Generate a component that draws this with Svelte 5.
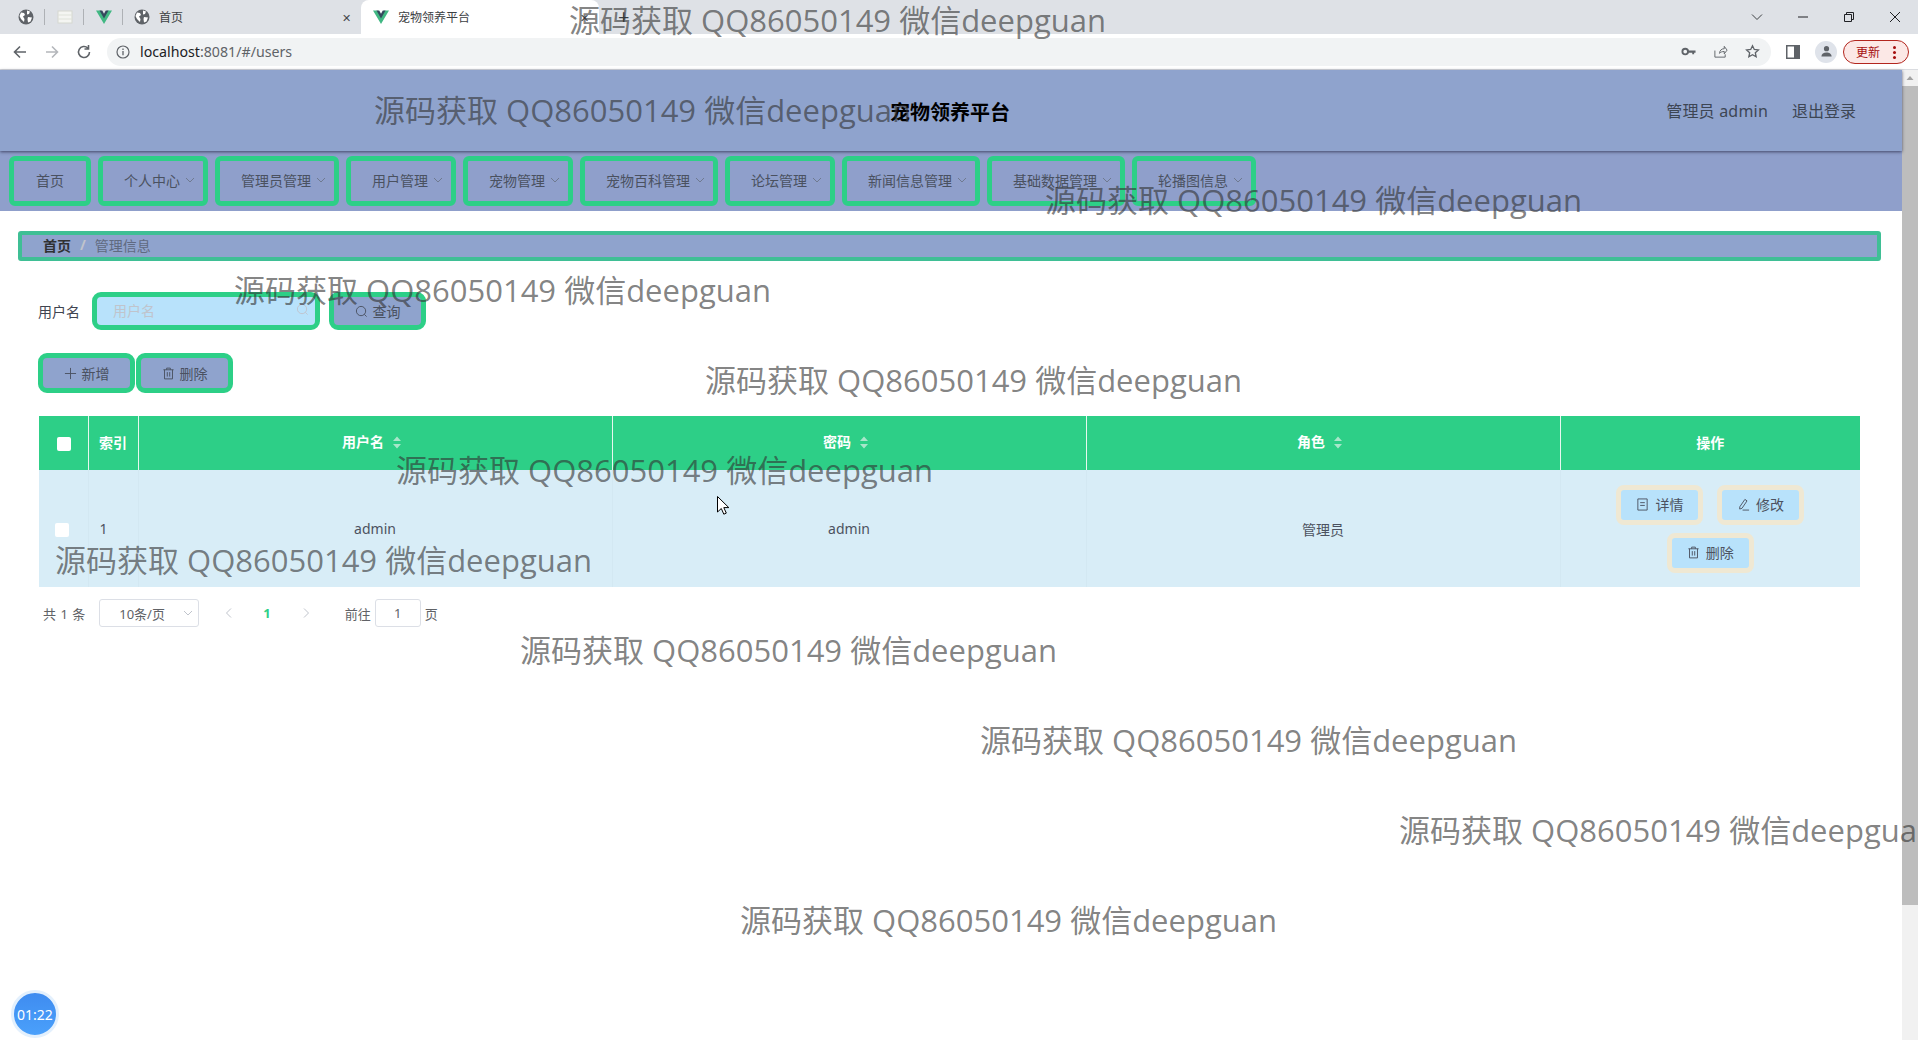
<script lang="ts">
	// Users admin page inside a browser frame. Watermarks sit over everything.
	const menus = [
		{ label: '首页', sub: false },
		{ label: '个人中心', sub: true },
		{ label: '管理员管理', sub: true },
		{ label: '用户管理', sub: true },
		{ label: '宠物管理', sub: true },
		{ label: '宠物百科管理', sub: true },
		{ label: '论坛管理', sub: true },
		{ label: '新闻信息管理', sub: true },
		{ label: '基础数据管理', sub: true },
		{ label: '轮播图信息', sub: true }
	];

	// left / top of each repeated watermark line, the scatter is the content
	const marks = [
		[569, -1],
		[374, 89],
		[1045, 179],
		[234, 269],
		[705, 359],
		[396, 449],
		[55, 539],
		[520, 629],
		[980, 719],
		[1399, 809],
		[740, 899]
	];
</script>

{#snippet vue()}
	<svg class="fav" viewBox="0 0 16 16"><path d="M0 1.5h4.5L8 7.5l3.500-6H16L8 15z" fill="#41b883" /><path d="M3.500 1.500h2.700L8 4.700l1.800-3.200h2.700L8 9.500z" fill="#35495e" /></svg>
{/snippet}

{#snippet globe()}
	<svg class="fav" viewBox="0 0 16 16"><circle cx="8" cy="8" r="7.500" fill="#5f6368" /><path d="M3 3.500l3 .5 1 2-2 1.500 1.500 2.500-.5 3L3 10 1.500 7zM9 1.500l3 1-1 2.500-2 .5zM10 8l4 .5-1.500 4L10 13.500 9.500 10z" fill="#fff" /></svg>
{/snippet}

{#snippet caret()}
	<svg class="caret" viewBox="0 0 12 12"><path d="M2 4l4 4 4-4" fill="none" stroke="currentColor" stroke-width="1" /></svg>
{/snippet}

{#snippet sort()}
	<svg class="sort" viewBox="0 0 10 14"><path d="M5 1l4 4.500H1zM5 13L1 8.500h8z" fill="currentColor" /></svg>
{/snippet}

{#snippet trash()}
	<svg class="ico" viewBox="0 0 14 14"><path d="M1.500 3h11M5 3V1.200h4V3M2.700 3v9.800h8.600V3M5.700 5.500v4.800M8.300 5.500v4.800" fill="none" stroke="currentColor" stroke-width="1" /></svg>
{/snippet}

{#snippet search()}
	<svg class="ico" viewBox="0 0 14 14"><circle cx="6.500" cy="6.500" r="5" fill="none" stroke="currentColor" stroke-width="1" /><path d="M10 10l2.500 2.500" stroke="currentColor" stroke-width="1" /></svg>
{/snippet}

<div class="browser">
	<div class="tabstrip">
		<div class="pinned">{@render globe()}</div>
		<div class="pinned">
			<svg class="fav" viewBox="0 0 16 16"><rect x="1" y="2" width="14" height="12" fill="#f4f5f2" stroke="#d5d8d0" /><path d="M1 6h14M1 10h14" stroke="#dfe2da" /></svg>
		</div>
		<div class="pinned">{@render vue()}</div>
		<div class="tab">
			{@render globe()}
			<span class="tab-title">首页</span>
			<span class="tab-close">✕</span>
		</div>
		<div class="tab active">
			{@render vue()}
			<span class="tab-title">宠物领养平台</span>
			<span class="tab-close">✕</span>
		</div>
		<span class="newtab">+</span>
		<div class="winctl">
			<svg viewBox="0 0 12 12"><path d="M1 3.500l5 5 5-5" fill="none" stroke="#3c4043" /></svg>
			<svg viewBox="0 0 12 12"><path d="M1 6h10" stroke="#202124" /></svg>
			<svg viewBox="0 0 12 12"><path d="M1.500 3.500h7v7h-7zM3.500 3.500v-2h7v7h-2" fill="none" stroke="#202124" /></svg>
			<svg viewBox="0 0 12 12"><path d="M1 1l10 10M11 1L1 11" stroke="#202124" /></svg>
		</div>
	</div>

	<div class="toolbar">
		<svg class="nav-ico" viewBox="0 0 16 16"><path d="M14 8H2.500M8 2.500L2.500 8 8 13.500" fill="none" stroke="#5f6368" stroke-width="1.600" /></svg>
		<svg class="nav-ico" viewBox="0 0 16 16"><path d="M2 8h11.500M8 2.500L13.500 8 8 13.500" fill="none" stroke="#b4b7bb" stroke-width="1.600" /></svg>
		<svg class="nav-ico" viewBox="0 0 16 16"><path d="M13.500 8A5.500 5.500 0 1 1 11.800 4M12.500 1v4h-4" fill="none" stroke="#5f6368" stroke-width="1.600" /></svg>
		<div class="omnibox">
			<svg class="info" viewBox="0 0 14 14"><circle cx="7" cy="7" r="6" fill="none" stroke="#5f6368" stroke-width="1.200" /><path d="M7 6v4.200M7 3.500v1.400" stroke="#5f6368" stroke-width="1.300" /></svg>
			<span class="url">localhost<span class="url-dim">:8081/#/users</span></span>
			<span class="omni-right">
				<svg viewBox="0 0 16 16"><circle cx="4.500" cy="8" r="3" fill="none" stroke="#5f6368" stroke-width="2" /><path d="M7.500 7h8v2.200h-1.500V11H12V9.200H7.500z" fill="#5f6368" /></svg>
				<svg viewBox="0 0 16 16"><path d="M2 7v7h11v-3M7 10c0-3 2-5 5-5V2.500l3 4-3 4V8c-2 0-4 .5-5 2z" fill="none" stroke="#5f6368" /></svg>
				<svg viewBox="0 0 16 16"><path d="M8 1.800l1.900 4 4.400.5-3.300 3 .9 4.400L8 11.500l-3.900 2.200.9-4.400-3.300-3 4.400-.5z" fill="none" stroke="#5f6368" stroke-width="1.400" /></svg>
			</span>
		</div>
		<svg class="panel" viewBox="0 0 14 14"><path d="M0 0h14v14H0z" fill="#5f6368" /><path d="M1.500 1.500h6.500v11H1.500z" fill="#fff" /></svg>
		<span class="avatar">
			<svg viewBox="0 0 14 14"><circle cx="7" cy="4" r="2.800" fill="#5f6368" /><path d="M1.500 12.500c0-3 2.500-4.500 5.500-4.500s5.500 1.500 5.500 4.500z" fill="#5f6368" /></svg>
		</span>
		<span class="update">更新<i class="dots"></i></span>
	</div>

	<div class="viewport">
		<div class="page">
			<header class="top">
				<span></span>
				<h1 class="title">宠物领养平台</h1>
				<div class="user">
					<span class="who">管理员 admin</span>
					<span>退出登录</span>
				</div>
			</header>

			<nav class="menu">
				{#each menus as m (m.label)}
					<div class="menu-item" class:plain={!m.sub}>
						{m.label}
						{#if m.sub}{@render caret()}{/if}
					</div>
				{/each}
			</nav>

			<div class="crumb">
				<b>首页</b>
				<i>/</i>
				<span>管理信息</span>
			</div>

			<div class="filter">
				<span class="field-label">用户名</span>
				<div class="input">
					<span>用户名</span>
					{@render search()}
				</div>
				<button class="btn query">{@render search()}查询</button>
			</div>

			<div class="actions">
				<button class="btn">
					<svg class="ico" viewBox="0 0 14 14"><path d="M7 1v12M1 7h12" stroke="currentColor" stroke-width="1" /></svg>
					新增
				</button>
				<button class="btn">{@render trash()}删除</button>
			</div>

			<table class="grid">
				<colgroup>
					<col style="width: 49px" />
					<col style="width: 50px" />
					<col style="width: 474px" />
					<col style="width: 474px" />
					<col style="width: 474px" />
					<col />
				</colgroup>
				<thead>
					<tr>
						<th><span class="check head"></span></th>
						<th>索引</th>
						<th class="sortable">用户名{@render sort()}</th>
						<th class="sortable">密码{@render sort()}</th>
						<th class="sortable">角色{@render sort()}</th>
						<th>操作</th>
					</tr>
				</thead>
				<tbody>
					<tr>
						<td><span class="check"></span></td>
						<td class="idx">1</td>
						<td>admin</td>
						<td>admin</td>
						<td>管理员</td>
						<td class="ops">
							<button class="op">
								<svg class="ico" viewBox="0 0 14 14"><path d="M2 1h10v12H2zM4.500 5h5M4.500 8h5" fill="none" stroke="currentColor" /></svg>
								详情
							</button>
							<button class="op">
								<svg class="ico" viewBox="0 0 14 14"><path d="M3 9.500L8.500 1.500l2.300 1.600-5.400 8-2.500.8zM6 13h7" fill="none" stroke="currentColor" /></svg>
								修改
							</button>
							<button class="op">{@render trash()}删除</button>
						</td>
					</tr>
				</tbody>
			</table>

			<div class="pager">
				<span class="total">共 1 条</span>
				<div class="size">10条/页{@render caret()}</div>
				<svg class="arrow" viewBox="0 0 12 12"><path d="M8 1.500L3.500 6 8 10.500" fill="none" stroke="#c0c4cc" /></svg>
				<b class="current">1</b>
				<svg class="arrow" viewBox="0 0 12 12"><path d="M4 1.500L8.500 6 4 10.500" fill="none" stroke="#c0c4cc" /></svg>
				<span class="goto">前往</span>
				<span class="jump">1</span>
				<span>页</span>
			</div>
		</div>

		<div class="scrollbar">
			<svg viewBox="0 0 16 16"><path d="M4.500 10L8 6l3.500 4z" fill="#a3a3a3" /></svg>
			<div class="thumb"></div>
		</div>
	</div>

	<div class="timer">01:22</div>

	<svg class="cursor" viewBox="0 0 12 19"><path d="M.5.500v15.500l3.800-3.500 2.500 5.700 2.500-1.100-2.500-5.500h5z" fill="#fff" stroke="#000" /></svg>

	{#each marks as [x, y]}
		<div class="mark" style="left: {x}px; top: {y}px">源码获取 QQ86050149 微信deepguan</div>
	{/each}
</div>

<style>
	:global(body) {
		margin: 0;
		overflow: hidden;
		background: #fff;
	}

	.browser {
		position: relative;
		height: 1040px;
		overflow: hidden;
		font-family: 'Noto Sans', 'Noto Sans CJK SC', sans-serif;
		display: flex;
		flex-direction: column;
	}

	/* browser frame */
	.tabstrip {
		height: 34px;
		flex: none;
		background: #dee1e6;
		display: flex;
		align-items: stretch;
		padding-left: 6px;
		font-size: 12px;
		color: #3c4043;
	}

	.fav {
		width: 16px;
		height: 16px;
		flex: none;
	}

	.pinned {
		width: 39px;
		display: flex;
		align-items: center;
		justify-content: center;
		position: relative;
	}

	.pinned::after {
		content: '';
		position: absolute;
		right: 0;
		top: 9px;
		bottom: 9px;
		width: 1px;
		background: #aeb1b5;
	}

	.tab {
		width: 238px;
		display: flex;
		align-items: center;
		gap: 9px;
		padding: 0 10px 0 11px;
		box-sizing: border-box;
	}

	.tab.active {
		background: #fff;
		border-radius: 8px 8px 0 0;
		padding-left: 12px;
	}

	.tab-title {
		flex: 1;
	}

	.tab-close {
		font-size: 11px;
		color: #45484c;
	}

	.newtab {
		font-size: 20px;
		line-height: 34px;
		margin-left: 19px;
		color: #3c4043;
	}

	.winctl {
		margin-left: auto;
		display: flex;
		align-items: center;
		gap: 34px;
		padding-right: 17px;
	}

	.winctl svg {
		width: 12px;
		height: 12px;
	}

	.toolbar {
		height: 36px;
		flex: none;
		background: #fff;
		display: flex;
		align-items: center;
		padding-left: 12px;
		box-sizing: border-box;
		border-bottom: 1px solid #dadce0;
	}

	.nav-ico {
		width: 16px;
		height: 16px;
		margin-right: 16px;
	}

	.omnibox {
		width: 1664px;
		height: 28px;
		margin-left: -1px;
		background: #f1f3f4;
		border-radius: 14px;
		display: flex;
		align-items: center;
		padding: 0 9px;
		box-sizing: border-box;
		font-size: 14.2px;
		color: #202124;
	}

	.info {
		width: 14px;
		height: 14px;
		margin-right: 10px;
	}

	.url-dim {
		color: #5f6368;
	}

	.omni-right {
		margin-left: auto;
		display: flex;
		gap: 17px;
		padding-right: 2px;
	}

	.omni-right svg {
		width: 15px;
		height: 15px;
	}

	.panel {
		width: 14px;
		height: 14px;
		margin-left: 15px;
	}

	.avatar {
		width: 22px;
		height: 22px;
		border-radius: 50%;
		background: #dfe3ea;
		margin-left: 15px;
		display: flex;
		align-items: center;
		justify-content: center;
	}

	.avatar svg {
		width: 13px;
		height: 13px;
	}

	.update {
		width: 66px;
		height: 24px;
		margin-left: 6px;
		box-sizing: border-box;
		border: 1px solid #b3261e;
		border-radius: 12px;
		background: #fce8e6;
		color: #a50e0e;
		font-size: 12px;
		padding-left: 12px;
		display: flex;
		align-items: center;
		position: relative;
	}

	.dots {
		position: absolute;
		right: 12px;
		top: 5px;
		width: 3px;
		height: 3px;
		border-radius: 50%;
		background: #a50e0e;
		box-shadow:
			0 5px 0 #a50e0e,
			0 10px 0 #a50e0e;
	}

	/* page */
	.viewport {
		flex: 1;
		display: flex;
		min-height: 0;
	}

	.page {
		width: 1902px;
		flex: none;
		font-size: 14px;
		color: #606266;
	}

	.top {
		height: 81px;
		background: #8fa3cd;
		display: grid;
		grid-template-columns: 1fr auto 1fr;
		align-items: center;
		box-shadow: 0 1px 3px rgba(40, 40, 70, 0.75);
		position: relative;
	}

	.title {
		margin: 1px 2px 0 0;
		font-size: 20px;
		font-weight: 700;
		color: #000;
	}

	.user {
		display: flex;
		justify-content: flex-end;
		gap: 24px;
		padding: 0 46px 2px 0;
		font-size: 16px;
		color: #3d4654;
	}

	.who {
		letter-spacing: 0.2px;
	}

	.menu {
		height: 60px;
		background: #8f9fcb;
		display: flex;
		align-items: center;
		gap: 7px;
		padding: 0 0 0 9px;
	}

	.menu-item {
		height: 50px;
		box-sizing: border-box;
		border: 5px solid #2dcf87;
		border-radius: 6px;
		padding: 0 0 2px 21px;
		display: flex;
		align-items: center;
		color: #4a5160;
		white-space: nowrap;
	}

	.menu-item.plain {
		padding: 0 22px 2px;
	}

	.caret {
		width: 12px;
		height: 12px;
		margin-left: 4px;
		margin-right: 7px;
		color: #6f7a90;
	}

	.crumb {
		height: 30px;
		margin: 20px 21px 0 18px;
		box-sizing: border-box;
		background: #8fa3cd;
		border: 4px solid #3fbf95;
		border-radius: 3px;
		display: flex;
		align-items: center;
		padding: 0 0 3px 21px;
		color: #5f6a80;
	}

	.crumb b {
		color: #303133;
	}

	.crumb i {
		font-style: normal;
		margin: 0 9px;
		color: #c0c4cc;
		font-weight: 700;
	}

	.filter {
		display: flex;
		align-items: center;
		margin: 31px 0 0 38px;
		height: 38px;
	}

	.field-label {
		width: 54px;
		padding-bottom: 1px;
		color: #3f4450;
	}

	.input {
		width: 228px;
		height: 38px;
		box-sizing: border-box;
		border: 5px solid #2dcf87;
		border-radius: 9px;
		background: #b8e2fb;
		color: #c0c4cc;
		display: flex;
		align-items: center;
		justify-content: space-between;
		padding: 0 6px 3px 16px;
	}

	.btn {
		height: 100%;
		box-sizing: border-box;
		border: 5px solid #2dcf87;
		border-radius: 9px;
		background: #8fa3cd;
		font: inherit;
		color: #4a5160;
		display: flex;
		align-items: center;
		justify-content: center;
		gap: 5px;
		padding: 0;
		width: 97px;
	}

	.query {
		margin-left: 9px;
	}

	.ico {
		width: 13px;
		height: 13px;
		flex: none;
	}

	.actions {
		display: flex;
		gap: 1px;
		height: 40px;
		margin: 23px 0 0 38px;
	}

	.grid {
		width: 1821px;
		margin: 23px 0 0 39px;
		border-collapse: collapse;
		table-layout: fixed;
		font-size: 14px;
		color: #4c5260;
	}

	.grid th {
		height: 54px;
		padding: 0 0 2px;
		box-sizing: border-box;
		background: #2dcf87;
		color: #fff;
		font-size: 14px;
		font-weight: 700;
		border-left: 1px solid #e6f7ef;
	}

	.grid th:first-child {
		border-left: 0;
		padding-left: 2px;
	}

	.grid th.sortable {
		padding: 0 6px 4px 0;
	}

	.grid td {
		height: 117px;
		padding: 0;
		background: #d8edf7;
		text-align: center;
		border-left: 1px solid #d3e8f2;
	}

	.grid td:first-child {
		border-left: 0;
	}

	.grid td.idx {
		text-align: left;
		padding-left: 11px;
	}

	.sort {
		width: 10px;
		height: 15px;
		color: #a8e6ca;
		vertical-align: -3px;
		margin-left: 8px;
	}

	.check {
		display: inline-block;
		width: 14px;
		height: 14px;
		background: #fff;
		border-radius: 2px;
		vertical-align: middle;
	}

	.grid td .check {
		margin-right: 3px;
	}

	.grid td.ops {
		line-height: 0;
		padding: 0 20px;
	}

	.op {
		width: 87px;
		height: 40px;
		margin: 4px 5px;
		box-sizing: border-box;
		border: 5px solid #efe8d3;
		border-radius: 8px;
		background: #b8e2fb;
		font: inherit;
		font-size: 14px;
		color: #4c5260;
		display: inline-flex;
		align-items: center;
		justify-content: center;
		gap: 6px;
		padding: 0;
		line-height: 1;
		vertical-align: top;
	}

	.pager {
		display: flex;
		align-items: center;
		height: 28px;
		margin: 12px 0 0 43px;
		font-size: 13px;
		color: #606266;
	}

	.total {
		word-spacing: 1px;
	}

	.size {
		width: 100px;
		height: 28px;
		box-sizing: border-box;
		margin-left: 14px;
		border: 1px solid #dcdfe6;
		border-radius: 3px;
		display: flex;
		align-items: center;
		justify-content: space-between;
		padding-left: 19px;
	}

	.size .caret {
		margin-right: 4px;
		color: #c0c4cc;
	}

	.arrow {
		width: 12px;
		height: 12px;
		margin-left: 24px;
	}

	.current {
		margin-left: 28px;
		margin-right: 5px;
		color: #2dcf87;
	}

	.goto {
		margin-left: 33px;
	}

	.jump {
		width: 46px;
		height: 28px;
		box-sizing: border-box;
		margin: 0 4px;
		border: 1px solid #dcdfe6;
		border-radius: 3px;
		display: flex;
		align-items: center;
		justify-content: center;
	}

	.scrollbar {
		flex: 1;
		background: #f1f1f1;
		display: flex;
		flex-direction: column;
	}

	.scrollbar svg {
		width: 16px;
		height: 16px;
		flex: none;
	}

	.thumb {
		height: 819px;
		background: #bdbdbd;
	}

	/* overlays */
	.timer {
		position: absolute;
		left: 11px;
		top: 990px;
		width: 48px;
		height: 48px;
		box-sizing: border-box;
		border: 3px solid #e3f0fd;
		border-radius: 50%;
		background: linear-gradient(180deg, #3f8cf0, #4aa0fb);
		color: #fff;
		font-size: 14px;
		display: flex;
		align-items: center;
		justify-content: center;
	}

	.cursor {
		position: absolute;
		left: 717px;
		top: 496px;
		width: 12px;
		height: 19px;
	}

	.mark {
		position: absolute;
		font-family: 'Open Sans', 'Noto Sans CJK SC', sans-serif;
		font-size: 31px;
		line-height: 42px;
		white-space: nowrap;
		color: rgba(50, 50, 50, 0.62);
		pointer-events: none;
	}
</style>
